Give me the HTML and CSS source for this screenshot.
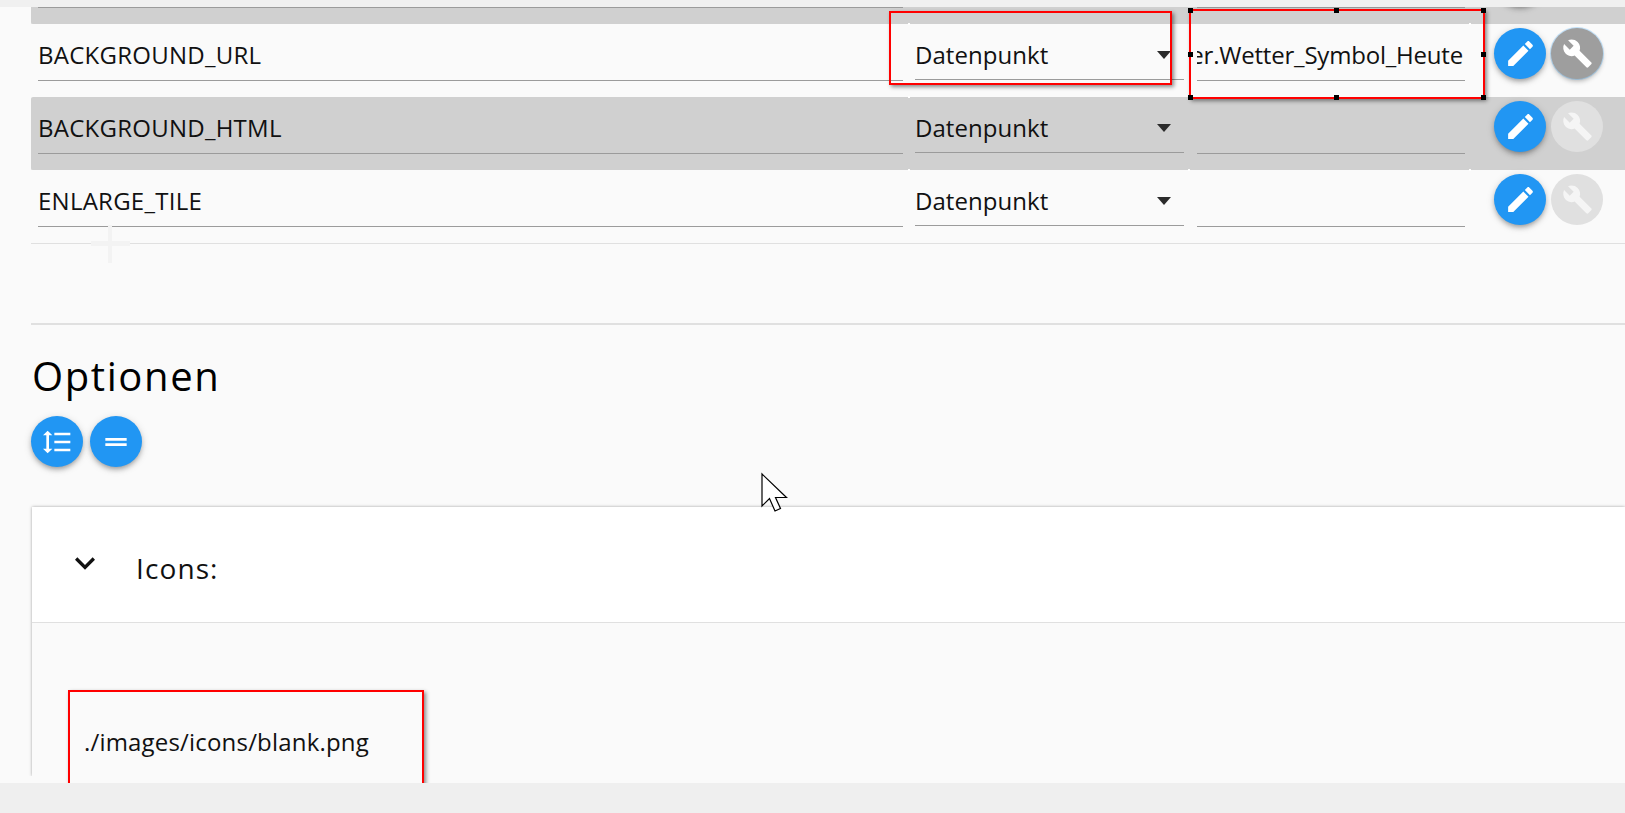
FILE: index.html
```html
<!DOCTYPE html>
<html lang="de">
<head>
<meta charset="utf-8">
<title>Optionen</title>
<link rel="stylesheet" href="styles.css">
</head>
<body>
<div class="strip"></div>
<main class="main">
  <div class="table">
    <div class="row grey">
      <div class="field name"></div>
      <div class="field select"></div>
      <div class="field value"></div>
      <div class="actions">
        <button class="fab"></button>
        <button class="fab off"></button>
      </div>
    </div>
    <div class="row">
      <div class="field name">BACKGROUND_URL</div>
      <div class="field select">Datenpunkt<span class="arrow"></span></div>
      <div class="field value"><span>Wetter.Wetter_Symbol_Heute</span></div>
      <div class="actions">
        <button class="fab"><svg class="i33" viewBox="0 0 24 24"><path d="M3 17.25V21h3.75L17.81 9.94l-3.75-3.75L3 17.25zM20.71 7.04c.39-.39.39-1.02 0-1.41l-2.34-2.34c-.39-.39-1.02-.39-1.41 0l-1.83 1.83 3.75 3.75 1.83-1.83z"/></svg></button>
        <button class="fab on"><svg class="i31" viewBox="0 0 24 24"><path d="M22.7 19l-9.1-9.1c.9-2.3.4-5-1.5-6.9-2-2-5-2.4-7.4-1.3L9 6 6 9 1.6 4.7C.4 7.1.9 10.1 2.9 12.1c1.9 1.9 4.6 2.4 6.9 1.5l9.1 9.1c.4.4 1 .4 1.4 0l2.3-2.3c.5-.4.5-1.1.1-1.4z"/></svg></button>
      </div>
    </div>
    <div class="row grey">
      <div class="field name">BACKGROUND_HTML</div>
      <div class="field select">Datenpunkt<span class="arrow"></span></div>
      <div class="field value"></div>
      <div class="actions">
        <button class="fab"><svg class="i33" viewBox="0 0 24 24"><path d="M3 17.25V21h3.75L17.81 9.94l-3.75-3.75L3 17.25zM20.71 7.04c.39-.39.39-1.02 0-1.41l-2.34-2.34c-.39-.39-1.02-.39-1.41 0l-1.83 1.83 3.75 3.75 1.83-1.83z"/></svg></button>
        <button class="fab off"><svg class="i31" viewBox="0 0 24 24"><path d="M22.7 19l-9.1-9.1c.9-2.3.4-5-1.5-6.9-2-2-5-2.4-7.4-1.3L9 6 6 9 1.6 4.7C.4 7.1.9 10.1 2.9 12.1c1.9 1.9 4.6 2.4 6.9 1.5l9.1 9.1c.4.4 1 .4 1.4 0l2.3-2.3c.5-.4.5-1.1.1-1.4z"/></svg></button>
      </div>
    </div>
    <div class="row last">
      <div class="field name">ENLARGE_TILE</div>
      <div class="field select">Datenpunkt<span class="arrow"></span></div>
      <div class="field value"></div>
      <div class="actions">
        <button class="fab"><svg class="i33" viewBox="0 0 24 24"><path d="M3 17.25V21h3.75L17.81 9.94l-3.75-3.75L3 17.25zM20.71 7.04c.39-.39.39-1.02 0-1.41l-2.34-2.34c-.39-.39-1.02-.39-1.41 0l-1.83 1.83 3.75 3.75 1.83-1.83z"/></svg></button>
        <button class="fab off"><svg class="i31" viewBox="0 0 24 24"><path d="M22.7 19l-9.1-9.1c.9-2.3.4-5-1.5-6.9-2-2-5-2.4-7.4-1.3L9 6 6 9 1.6 4.7C.4 7.1.9 10.1 2.9 12.1c1.9 1.9 4.6 2.4 6.9 1.5l9.1 9.1c.4.4 1 .4 1.4 0l2.3-2.3c.5-.4.5-1.1.1-1.4z"/></svg></button>
      </div>
    </div>
  </div>

  <hr class="rule">
  <h2 class="title">Optionen</h2>
  <div class="tools">
    <button class="fab"><svg class="i32" viewBox="0 0 24 24"><path d="M6 7h2.5L5 3.5 1.5 7H4v10H1.5L5 20.5 8.5 17H6V7zm4-2v2h12V5H10zm0 14h12v-2H10v2zm0-6h12v-2H10v2z"/></svg></button>
    <button class="fab"><svg class="i32" viewBox="0 0 24 24"><path d="M20 9H4v2h16V9zM4 15h16v-2H4v2z"/></svg></button>
  </div>

  <section class="card">
    <header class="card-head">
      <svg class="chevron" viewBox="0 0 24 24"><path d="M16.59 8.59L12 13.17 7.41 8.59 6 10l6 6 6-6z"/></svg>
      <span class="card-title">Icons:</span>
    </header>
    <div class="card-body"></div>
  </section>

  <div class="cross-v"></div>
  <div class="cross-h"></div>

  <i class="tick t1"></i><i class="tick t2"></i><i class="tick t3"></i>
  <i class="tick t4"></i><i class="tick t5"></i><i class="tick t6"></i>

  <div class="mark box1"></div>
  <div class="mark box2">
    <i class="h tl"></i><i class="h tc"></i><i class="h tr"></i>
    <i class="h ml"></i><i class="h mr"></i>
    <i class="h bl"></i><i class="h bc"></i><i class="h br"></i>
  </div>
  <div class="mark box3"><span class="path">./images/icons/blank.png</span></div>

  <svg class="cursor" viewBox="0 0 28 40"><path d="M1 1 L1 33 L8.500 25.500 L14 38 L19.500 35.500 L14.500 24.500 L25.500 24.500 Z" fill="#fff" stroke="#000" stroke-width="1.200"/></svg>
</main>
</body>
</html>
```
FILE: styles.css
```css
* { box-sizing: border-box; }
html, body { margin: 0; height: 100%; }
body {
  background: #efefef;
  font-family: "Open Sans", "Noto Sans", sans-serif;
  color: #111;
  overflow: hidden;
}
.strip { height: 7px; background: #f0f0f0; }
.main {
  position: relative;
  height: 776px;
  background: #fafafa;
  overflow: hidden;
}
.table { margin: -56px 0 0 31px; }
.row {
  display: flex;
  height: 73px;
  padding-left: 7px;
  background: #fafafa;
}
.row.grey { background: #d0d0d0; border-radius: 2px 0 0 2px; box-shadow: 0 1px 0 #e4e4e4; }
.row.last { height: 74px; border-bottom: 1px solid #e0e0e0; }
.field {
  display: flex;
  align-items: center;
  height: 57px;
  border-bottom: 1px solid #9b9b9b;
  font-size: 24px;
  letter-spacing: 0.25px;
  white-space: nowrap;
  overflow: hidden;
  padding-top: 4px;
}
.name { width: 865px; }
.select { position: relative; width: 269px; margin-left: 12px; height: 56px; padding-top: 6px; letter-spacing: 0.05px; }
.value { width: 268px; margin-left: 13px; justify-content: flex-end; letter-spacing: -0.2px; }
.value span { flex: none; padding-right: 2px; }
.arrow {
  position: absolute;
  left: 242px;
  top: 27px;
  border-left: 7px solid transparent;
  border-right: 7px solid transparent;
  border-top: 8px solid #2b2b2b;
}
.actions { display: flex; gap: 5px; margin: 4px 0 0 29px; }
.fab {
  display: flex;
  align-items: center;
  justify-content: center;
  width: 52px;
  height: 51px;
  padding: 0;
  border: 0;
  border-radius: 50%;
  background: #2196f3;
  box-shadow: 0 3px 5px -1px rgba(0,0,0,.3), 0 2px 8px rgba(0,0,0,.14);
}
.fab svg { fill: #fff; display: block; }
.fab.on { background: #9e9e9e; box-shadow: 0 0 0 1px rgba(33,150,243,.25), 0 3px 5px -1px rgba(0,0,0,.3); }
.fab.off { background: #e0e0e0; box-shadow: none; }
.fab.off svg { fill: #f5f5f5; }
.i33 { width: 33px; height: 33px; }
.i31 { width: 31px; height: 31px; }
.i32 { width: 32px; height: 32px; }

.rule {
  height: 2px;
  margin: 79px 0 0 31px;
  border: 0;
  background: #e0e0e0;
}
.title {
  margin: 21px 0 0 32px;
  height: 60px;
  font-size: 40px;
  line-height: 60px;
  font-weight: 400;
  letter-spacing: 1.6px;
  color: #000;
}
.tools { display: flex; gap: 7px; margin: 10px 0 0 31px; }
.card {
  margin: 40px 0 0 32px;
  height: 269px;
  background: #fafafa;
  box-shadow: 0 0 3px rgba(0,0,0,.35);
  clip-path: inset(-5px 0 0 -5px);
}
.card-head {
  display: flex;
  align-items: center;
  height: 116px;
  padding-left: 33px;
  background: #fff;
  border-bottom: 1px solid #e0e0e0;
}
.chevron { width: 40px; height: 40px; margin-top: -3px; fill: #111; }
.card-title { margin: 6px 0 0 31px; font-size: 28px; letter-spacing: 1.1px; }

.cross-v { position: absolute; left: 108px; top: 218px; width: 4px; height: 38px; background: #f3f3f3; }
.cross-h { position: absolute; left: 91px; top: 234px; width: 39px; height: 5px; background: #f3f3f3; }

.tick { position: absolute; width: 2px; height: 2px; background: #fff; }
.t1 { left: 908px; top: 16px; }
.t2 { left: 908px; top: 89px; }
.t3 { left: 908px; top: 162px; }
.t4 { left: 1188px; top: 162px; }
.t5 { left: 1469px; top: 16px; }
.t6 { left: 1469px; top: 162px; }

.mark {
  position: absolute;
  border: 2px solid #f00;
  box-shadow: 2px 2px 4px rgba(0,0,0,.45);
}
.box1 { left: 889px; top: 4px; width: 283px; height: 74px; }
.box2 { left: 1189px; top: 2px; width: 296px; height: 90px; }
.box3 { left: 68px; top: 683px; width: 356px; height: 120px; padding: 32px 0 0 14px; }
.path { font-size: 24px; line-height: 36px; letter-spacing: 0.18px; }
.h { position: absolute; width: 5px; height: 5px; background: #000; }
.tl { left: -3px; top: -3px; }
.tc { left: 143px; top: -3px; }
.tr { right: -3px; top: -3px; }
.ml { left: -3px; top: 41px; }
.mr { right: -3px; top: 41px; }
.bl { left: -3px; bottom: -3px; }
.bc { left: 143px; bottom: -3px; }
.br { right: -3px; bottom: -3px; }

.cursor { position: absolute; left: 761px; top: 466px; width: 28px; height: 40px; overflow: visible; }
```
